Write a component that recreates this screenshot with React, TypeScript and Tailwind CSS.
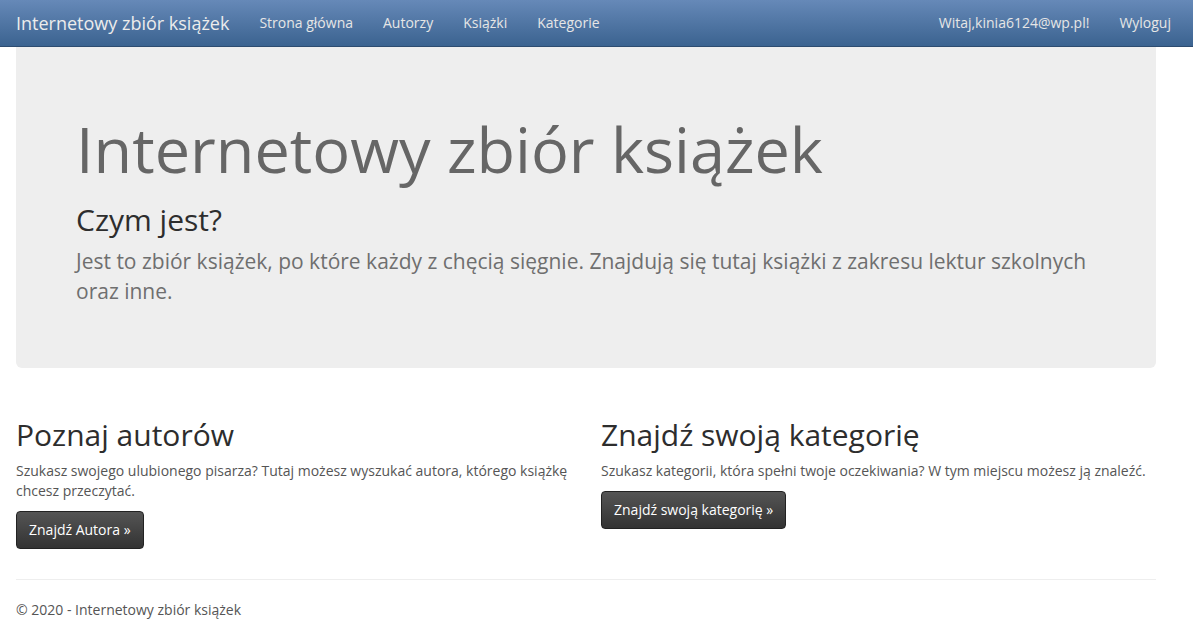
export default function App() {
  const font = { fontFamily: '"Open Sans", "Noto Sans", sans-serif' }
  const navLinks = ['Strona główna', 'Autorzy', 'Książki', 'Kategorie']

  return (
    <div className="min-h-[621px] bg-white text-[14px] leading-[20px] text-[#555]" style={font}>
      {/* Navbar */}
      <nav className="h-[47px] bg-gradient-to-b from-[#6689b8] to-[#3b6390] border-b border-[#2d4c70]">
        <div className="ml-[1px] w-[1170px] h-full flex items-center">
          <a className="pl-[15px] pr-[15px] text-[18px] text-[#ececec]">Internetowy zbiór książek</a>
          <ul className="flex">
            {navLinks.map(l => (
              <li key={l} className="px-[15px] text-[#e6e6e6]">{l}</li>
            ))}
          </ul>
          <ul className="flex ml-auto">
            <li className="px-[15px] text-[#e6e6e6]">Witaj,kinia6124@wp.pl!</li>
            <li className="pl-[15px] text-[#e6e6e6]">Wyloguj</li>
          </ul>
        </div>
      </nav>

      <div className="ml-[1px] w-[1170px] px-[15px]">
        {/* Jumbotron */}
        <div className="bg-[#eeeeee] rounded-b-[6px] px-[60px] pt-[67px] pb-[47px] mb-[30px]">
          <h1 className="text-[63px] leading-[69px] text-[#666]">Internetowy zbiór książek</h1>
          <h2 className="mt-[20px] mb-[10px] text-[30px] leading-[33px] text-[#2d2d2d]">Czym jest?</h2>
          <p className="text-[21px] leading-[30px] text-[#6f6f6f] mb-[15px]">
            Jest to zbiór książek, po które każdy z chęcią sięgnie. Znajdują się tutaj książki z zakresu lektur szkolnych oraz inne.
          </p>
        </div>

        {/* Columns */}
        <div className="grid grid-cols-2 gap-[30px]">
          <div>
            <h2 className="mt-[20px] mb-[10px] text-[30px] leading-[33px] text-[#2d2d2d]">Poznaj autorów</h2>
            <p className="mb-[10px] text-[#555]">
              Szukasz swojego ulubionego pisarza? Tutaj możesz wyszukać autora, którego książkę chcesz przeczytać.
            </p>
            <p className="mb-[10px]">
              <a className="inline-block px-[12px] py-[8px] rounded-[4px] border border-[#222] bg-gradient-to-b from-[#555] to-[#333] text-white">
                Znajdź Autora »
              </a>
            </p>
          </div>
          <div>
            <h2 className="mt-[20px] mb-[10px] text-[30px] leading-[33px] text-[#2d2d2d]">Znajdź swoją kategorię</h2>
            <p className="mb-[10px] text-[#555]">
              Szukasz kategorii, która spełni twoje oczekiwania? W tym miejscu możesz ją znaleźć.
            </p>
            <p className="mb-[10px]">
              <a className="inline-block px-[12px] py-[8px] rounded-[4px] border border-[#222] bg-gradient-to-b from-[#555] to-[#333] text-white">
                Znajdź swoją kategorię »
              </a>
            </p>
          </div>
        </div>

        <hr className="mt-[20px] mb-[20px] border-t border-[#eee]" />

        <footer>
          <p className="text-[#555]">© 2020 - Internetowy zbiór książek</p>
        </footer>
      </div>
    </div>
  )
}
